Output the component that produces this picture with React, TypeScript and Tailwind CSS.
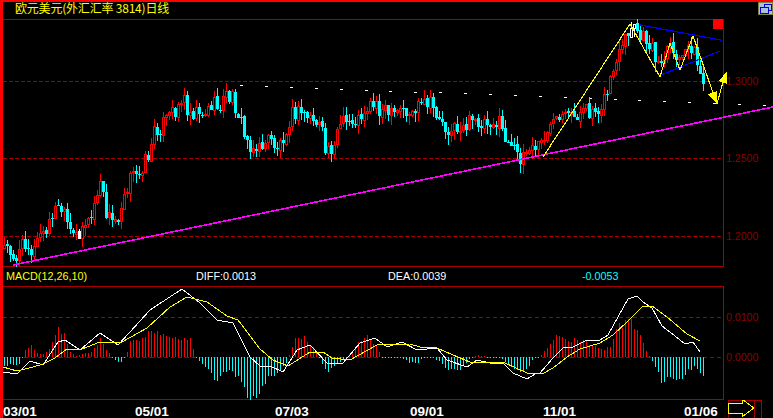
import React from "react";

type P = [number, number];
const price: P[] = [[3,247],[10,250],[16,258],[25,240],[33,253],[40,232],[46,235],[52,212],[60,208],[66,222],[72,240],[78,232],[84,222],[90,222],[96,195],[100,185],[106,212],[112,222],[118,215],[124,190],[130,178],[136,176],[142,165],[148,155],[155,130],[165,122],[175,108],[183,98],[190,112],[197,108],[205,113],[212,104],[218,108],[226,96],[232,98],[238,112],[245,140],[252,145],[258,152],[265,140],[272,142],[278,148],[285,130],[290,115],[300,112],[310,117],[320,127],[325,150],[332,145],[340,125],[350,122],[358,120],[365,107],[375,103],[385,112],[392,118],[400,110],[410,114],[420,107],[430,105],[437,115],[445,128],[455,130],[465,125],[475,122],[490,120],[500,125],[510,150],[520,155],[530,150],[540,145],[548,128],[555,125],[565,120],[575,115],[585,113],[595,108],[605,100],[612,70],[620,55],[628,35],[635,30],[640,38],[648,42],[655,55],[660,70],[668,50],[675,58],[682,62],[690,42],[695,55],[700,75],[704,85]];
const dif: P[] = [[3,372],[17,374],[30,361],[43,365],[58,342],[65,340],[80,350],[100,333],[118,345],[130,332],[150,310],[182,289],[200,303],[217,320],[233,323],[250,357],[260,366],[270,366],[283,372],[297,350],[310,345],[327,363],[343,363],[360,343],[375,338],[387,347],[402,342],[417,350],[437,348],[447,360],[467,367],[477,360],[490,363],[503,363],[513,373],[527,379],[535,374],[540,373],[553,358],[563,348],[573,347],[587,340],[600,340],[608,335],[618,317],[628,299],[637,296],[643,302],[652,308],[662,326],[670,332],[685,344],[693,342],[700,352]];
const dea: P[] = [[3,367],[17,371],[33,367],[43,364],[55,358],[67,349],[82,349],[100,342],[122,342],[147,328],[170,307],[187,297],[207,302],[227,316],[238,320],[260,349],[273,360],[288,366],[310,352],[323,352],[332,358],[350,360],[377,345],[410,344],[420,347],[437,348],[460,358],[470,362],[503,362],[527,373],[542,374],[553,368],[567,357],[580,349],[600,343],[613,335],[627,322],[642,307],[652,306],[667,317],[687,334],[700,341]];
const hist: P[] = [[3,-8],[18,-8],[22,0],[25,7],[30,13],[35,5],[40,3],[45,3],[52,13],[58,26],[62,26],[67,15],[70,5],[75,1],[85,4],[92,6],[100,17],[105,9],[110,3],[113,-1],[117,-5],[120,-6],[125,0],[127,6],[130,15],[140,17],[147,22],[152,27],[160,26],[170,20],[180,17],[190,20],[194,5],[196,-1],[200,-6],[207,-10],[215,-23],[222,-17],[230,-12],[240,-24],[247,-38],[255,-40],[261,-29],[270,-20],[280,-15],[287,-5],[290,5],[295,19],[305,20],[308,15],[318,3],[323,-10],[327,-17],[332,-12],[338,-7],[347,0],[352,7],[360,16],[367,19],[375,13],[382,0],[384,-1],[400,0],[410,-6],[417,-6],[423,-1],[430,0],[440,-5],[448,-14],[457,-13],[463,-9],[470,-1],[473,0],[477,2],[487,0],[500,0],[505,-5],[517,-13],[527,-13],[533,-1],[540,1],[548,10],[553,18],[562,23],[567,16],[578,18],[592,12],[603,7],[610,11],[618,30],[630,36],[635,30],[640,20],[644,10],[648,2],[652,-4],[657,-12],[662,-25],[670,-20],[680,-24],[690,-12],[695,-8],[702,-20]];

const interp = (pts: P[], x: number) => {
  for (let i = 1; i < pts.length; i++) {
    if (x <= pts[i][0]) {
      const [a, b] = pts[i - 1];
      const [c, d] = pts[i];
      return b + ((d - b) * (x - a)) / (c - a);
    }
  }
  return pts[pts.length - 1][1];
};
const rnd = (i: number) => {
  const s = Math.sin(i * 12.9898 + 4.1) * 43758.5453;
  return s - Math.floor(s);
};

const candles = (() => {
  const out: { x: number; o: number; c: number; h: number; l: number }[] = [];
  let prev = 247;
  for (let i = 0; i < 234; i++) {
    const x = 4 + 3 * i;
    const c = Math.round(interp(price, x) + (rnd(i) - 0.5) * 18);
    const o = Math.round(prev + (rnd(i + 500) - 0.5) * 3);
    const top = Math.min(o, c);
    const bot = Math.max(o, c);
    out.push({ x, o, c, h: top - Math.round(rnd(i + 900) * 9), l: bot + Math.round(rnd(i + 1300) * 10) });
    prev = c;
  }
  return out;
})();

const bars = Array.from({ length: 234 }, (_, i) => {
  const x = 4 + 3 * i;
  return { x, v: Math.round(interp(hist, x) * (0.85 + rnd(i + 77) * 0.3)) };
});

const pl = (pts: P[]) => pts.map((p) => p.join(",")).join(" ");
const RED = "#a80000";
const dashes = Array.from({ length: 22 }, (_, i) => ({ x: 240 + i * 24.9, y: Math.round(85 + i * 0.93) }));
const axisFont = { fontFamily: '"Liberation Sans", Arial, sans-serif' };

function Tick({ y, label }: { y: number; label: string }) {
  return (
    <text x={726} y={y + 4} fontSize={10.6} fill="#8c0000" style={axisFont}>
      {label}
    </text>
  );
}

export default function App() {
  return (
    <div className="w-[773px] h-[418px] bg-black flex flex-col overflow-hidden font-['Liberation_Sans','Noto_Sans_CJK_SC',sans-serif]">
      <div className="h-[2px] bg-[#ff0000] shrink-0" />
      <div className="flex h-[416px]">
        <div className="w-[3px] bg-[#ff0000] shrink-0" />
        <div className="w-[770px] flex flex-col">
          <div className="h-[17px] flex items-start justify-between shrink-0">
            <span className="pl-[12px] text-[12px] leading-[12px] tracking-[-0.2px] text-[#ffff00] font-['Noto_Sans_CJK_SC',sans-serif]">
              欧元美元(外汇汇率 3814)日线
            </span>
            <svg width="15" height="13" viewBox="0 0 15 13" shapeRendering="crispEdges">
              <rect x="0.5" y="0.5" width="14" height="12" fill="#a9c4d8" stroke="#808040" />
              <rect x="6.5" y="2.5" width="7" height="6" fill="none" stroke="#0000e0" />
              <rect x="2.5" y="5.5" width="8" height="6" fill="#a9c4d8" stroke="#0000e0" />
            </svg>
          </div>
          <svg width="770" height="248" viewBox="3 19 770 248" className="shrink-0 block">
            <Tick y={81} label="1.3000" />
            <Tick y={158} label="1.2500" />
            <Tick y={236} label="1.2000" />
            <g shapeRendering="crispEdges">
              <line x1="3" x2="723" y1="19.5" y2="19.5" stroke={RED} />
              {[81, 158, 236].map((y) => (
                <line key={y} x1="3" x2="723" y1={y + 0.5} y2={y + 0.5} stroke={RED} strokeDasharray="4 2" />
              ))}
              <line x1="723.5" x2="723.5" y1="19" y2="267" stroke={RED} />
              <line x1="3" x2="723" y1="266.5" y2="266.5" stroke={RED} />
              {dashes.map((d) => (
                <rect key={d.x} x={d.x} y={d.y} width="3" height="1" fill="#fff" />
              ))}
              {candles.map((k) => {
                const up = k.c < k.o;
                const top = Math.min(k.o, k.c);
                const h = Math.max(Math.abs(k.o - k.c), 1);
                const white = k.x === 631 || k.x === 634 || k.x === 79;
                const col = white ? "#fff" : up ? "#ff0000" : "#00ffff";
                return (
                  <g key={k.x}>
                    <line x1={k.x + 0.5} x2={k.x + 0.5} y1={k.h} y2={k.l} stroke={col} />
                    {up ? (
                      <rect x={k.x - 0.5} y={top + 0.5} width="2" height={h} fill="#000" stroke={col} />
                    ) : (
                      <rect x={k.x - 1} y={top} width="3" height={h} fill={col} />
                    )}
                  </g>
                );
              })}
              <rect x="713" y="19" width="10" height="10" fill="#ff0000" />
              <line x1="13" y1="265" x2="773" y2="107" stroke="#ff00ff" strokeWidth="1.6" />
              <polyline points="640,25 721,40" fill="none" stroke="#0000ff" strokeWidth="1.2" />
              <polyline points="661,75 720,51" fill="none" stroke="#0000ff" strokeWidth="1.2" />
              <polyline
                points="543,157 630,24 660,77 670,43 680,70 693,36 717,104 724,78"
                fill="none"
                stroke="#ffff00"
                strokeWidth="1.1"
              />
              <polygon points="727,71 719,81 727,84" fill="#ffff00" />
              <polygon points="708,94 717,91 717,104" fill="#ffff00" />
            </g>
          </svg>
          <div className="h-[19px] flex items-center text-[10.8px] leading-none shrink-0">
            <span className="w-[193px] pl-[3px] text-[#ffff00]">MACD(12,26,10)</span>
            <span className="w-[192px] text-white">DIFF:0.0013</span>
            <span className="w-[194px] text-white">DEA:0.0039</span>
            <span className="text-[#00ffff]">-0.0053</span>
          </div>
          <svg width="770" height="114" viewBox="3 286 770 114" className="shrink-0 block">
            <g shapeRendering="crispEdges">
              <line x1="3" x2="723" y1="286.5" y2="286.5" stroke={RED} />
              <line x1="3" x2="723" y1="399.5" y2="399.5" stroke={RED} />
              <line x1="723.5" x2="723.5" y1="286" y2="400" stroke={RED} />
              <line x1="3" x2="723" y1="317.5" y2="317.5" stroke={RED} strokeDasharray="4 3" />
              <line x1="3" x2="723" y1="357.5" y2="357.5" stroke={RED} strokeDasharray="4 3" />
              {bars.map((b) => (
                <line
                  key={b.x}
                  x1={b.x + 0.5}
                  x2={b.x + 0.5}
                  y1={357}
                  y2={357 - (b.v === 0 ? -1 : b.v)}
                  stroke={b.v > 0 ? "#ff0000" : "#00ffff"}
                />
              ))}
              <polyline points={pl(dif)} fill="none" stroke="#ffffff" />
              <polyline points={pl(dea)} fill="none" stroke="#ffff00" />
            </g>
            <Tick y={317} label="0.0100" />
            <Tick y={357} label="0.0000" />
          </svg>
          <div className="h-[18px] flex text-[13.5px] font-bold text-white leading-[23px] shrink-0 overflow-hidden">
            <span className="w-[132px]">03/01</span>
            <span className="w-[140px]">05/01</span>
            <span className="w-[135px]">07/03</span>
            <span className="w-[133px]">09/01</span>
            <span className="w-[141px]">11/01</span>
            <span className="w-[44px]">01/06</span>
            <svg width="34" height="18" viewBox="728 400 34 18" shapeRendering="crispEdges">
              <polyline points="728,400 761,400 761,418" fill="none" stroke={RED} />
              <line x1="728.5" x2="728.5" y1="400" y2="418" stroke={RED} />
              <line x1="754.5" x2="754.5" y1="400" y2="418" stroke={RED} />
              <polygon points="728,403 742,403 742,399 754,408 742,417 742,413 728,413" fill="none" stroke="#ffff00" />
            </svg>
          </div>
        </div>
      </div>
    </div>
  );
}
